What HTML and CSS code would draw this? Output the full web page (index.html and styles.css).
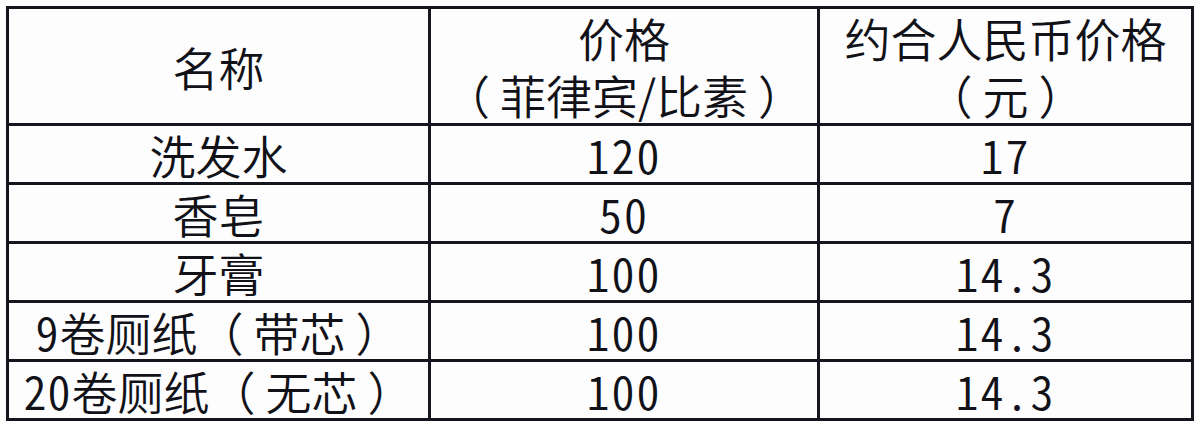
FILE: index.html
```html
<!DOCTYPE html>
<html lang="zh-CN">
<head>
<meta charset="utf-8">
<link rel="stylesheet" href="styles.css">
<title>价格表</title>
</head>
<body>
<table class="price-table">
  <colgroup>
    <col class="c1"><col class="c2"><col class="c3">
  </colgroup>
  <thead>
    <tr class="head">
      <th>名称</th>
      <th>价格<br><span class="lp">（</span>菲律宾/比素<span class="rp">）</span></th>
      <th>约合人民币价格<br><span class="lp">（</span>元<span class="rp">）</span></th>
    </tr>
  </thead>
  <tbody>
    <tr class="r1"><td>洗发水</td><td class="num">120</td><td class="num">17</td></tr>
    <tr class="r2"><td>香皂</td><td class="num">50</td><td class="num">7</td></tr>
    <tr class="r3"><td>牙膏</td><td class="num">100</td><td class="num">14.3</td></tr>
    <tr class="r4"><td><span class="dig">9</span>卷厕纸<span class="lp">（</span>带芯<span class="rp">）</span></td><td class="num">100</td><td class="num">14.3</td></tr>
    <tr class="r5"><td><span class="dig">20</span>卷厕纸<span class="lp">（</span>无芯<span class="rp">）</span></td><td class="num">100</td><td class="num">14.3</td></tr>
  </tbody>
</table>
</body>
</html>
```
FILE: styles.css
```css
html, body {
  margin: 0;
  padding: 0;
  background: #fdfdfe;
}
body {
  padding: 6px 0 0 6px;
  font-family: "Noto Sans CJK SC", "Noto Sans", sans-serif;
  color: #111118;
}
.price-table {
  border-collapse: collapse;
  table-layout: fixed;
  width: 1188px;
  font-size: 46px;
}
.c1 { width: 422px; }
.c2 { width: 389px; }
.c3 { width: 374px; }
.price-table th,
.price-table td {
  border: 3px solid #15151f;
  padding: 0;
  text-align: center;
  vertical-align: middle;
  font-weight: 350;
  line-height: 56px;
  white-space: nowrap;
}
.head { height: 117px; }
.head th { line-height: 57px; }
.r1 { height: 57px; }
.r2 { height: 58px; }
.r3 { height: 59px; }
.r4 { height: 58px; }
.r5 { height: 56px; }
.num,
.dig {
  font-family: "Noto Sans CJK SC", "Noto Sans", sans-serif;
  font-weight: 350;
  font-feature-settings: "hwid" 1;
}
.num { letter-spacing: 2px; }
.dig { letter-spacing: 1px; }
.lp { margin-right: 10px; }
.rp { margin-left: 10px; }
```
